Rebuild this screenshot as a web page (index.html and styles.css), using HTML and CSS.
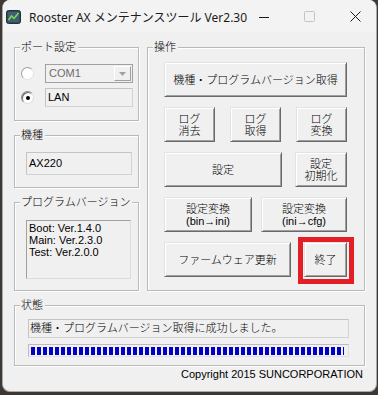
FILE: index.html
```html
<!DOCTYPE html>
<html lang="ja">
<head>
<meta charset="utf-8">
<title>Rooster AX メンテナンスツール</title>
<link rel="stylesheet" href="styles.css">
</head>
<body>
<div class="window">
  <div class="titlebar">
    <svg class="app-icon" width="15" height="14" viewBox="0 0 15 14">
      <rect x="0.5" y="0.5" width="14" height="13" rx="2" fill="#34495a" stroke="#22313c"/>
      <rect x="2" y="2" width="11" height="10" fill="#3d5f6e"/>
      <polyline points="2.5,10 5.5,6 8,8.5 12.5,3" fill="none" stroke="#7ed957" stroke-width="1.5"/>
    </svg>
    <span class="title">Rooster AX メンテナンスツール Ver2.30</span>
    <div class="caption">
      <svg class="cap-btn" width="12" height="12" viewBox="0 0 12 12"><line x1="1" y1="6.5" x2="11" y2="6.5" stroke="#1b1b1b" stroke-width="1"/></svg>
      <svg class="cap-btn" width="12" height="12" viewBox="0 0 12 12"><rect x="0.5" y="0.5" width="10" height="10" rx="1" fill="none" stroke="#c4c4c4"/></svg>
      <svg class="cap-btn" width="12" height="12" viewBox="0 0 12 12"><path d="M0.5 0.5 L10.5 10.5 M10.5 0.5 L0.5 10.5" stroke="#1b1b1b" stroke-width="1"/></svg>
    </div>
  </div>
  <div class="client">
    <div class="top">
      <div class="left-col">
        <div class="group port">
          <span class="legend">ポート設定</span>
          <div class="port-row">
            <span class="radio"></span>
            <div class="combo">
              <span class="combo-text">COM1</span>
              <span class="combo-btn"><svg width="7" height="4" viewBox="0 0 7 4"><path d="M0 0 H7 L3.5 4 Z" fill="#a0a0a0"/></svg></span>
            </div>
          </div>
          <div class="port-row">
            <span class="radio checked"></span>
            <div class="field lan">LAN</div>
          </div>
        </div>
        <div class="group model">
          <span class="legend">機種</span>
          <div class="field model-box">AX220</div>
        </div>
        <div class="group version">
          <span class="legend">プログラムバージョン</span>
          <div class="memo">
            <div>Boot: Ver.1.4.0</div>
            <div>Main: Ver.2.3.0</div>
            <div>Test: Ver.2.0.0</div>
          </div>
        </div>
      </div>
      <div class="group ops">
        <span class="legend">操作</span>
        <div class="btn-row">
          <button class="btn w-full">機種・プログラムバージョン取得</button>
        </div>
        <div class="btn-row gap15">
          <button class="btn w51">ログ<br>消去</button>
          <button class="btn w51">ログ<br>取得</button>
          <button class="btn w51">ログ<br>変換</button>
        </div>
        <div class="btn-row gap13">
          <button class="btn w118">設定</button>
          <button class="btn w52">設定<br>初期化</button>
        </div>
        <div class="btn-row gap9">
          <button class="btn w88">設定変換<br>(bin→ini)</button>
          <button class="btn w86">設定変換<br>(ini→cfg)</button>
        </div>
        <div class="btn-row gap13">
          <button class="btn w127">ファームウェア更新</button>
          <div class="highlight">
            <button class="btn w43">終了</button>
          </div>
        </div>
      </div>
    </div>
    <div class="group status">
      <span class="legend">状態</span>
      <div class="field status-box">機種・プログラムバージョン取得に成功しました。</div>
      <div class="progress"><div class="progress-fill"></div></div>
    </div>
    <div class="copyright">Copyright 2015 SUNCORPORATION</div>
  </div>
</div>
</body>
</html>
```
FILE: styles.css
```css
* { box-sizing: border-box; }

html, body {
  margin: 0;
  padding: 0;
}

body {
  width: 378px;
  height: 395px;
  overflow: hidden;
  background: #3d3833;
  font-family: "Liberation Sans", "Noto Sans CJK JP", sans-serif;
  font-size: 11px;
  font-weight: 300;
  color: #000;
}

.window {
  margin-left: 2px;
  width: 375px;
  height: 392px;
  background: #f0f0f0;
  border: 1px solid #a9a9a9;
  border-top: none;
  border-radius: 8px;
  overflow: hidden;
  display: flex;
  flex-direction: column;
}

.titlebar {
  height: 32px;
  flex: none;
  background: #f3f3f3;
  display: flex;
  align-items: center;
  padding-left: 3px;
}

.app-icon {
  display: block;
  margin-top: 1px;
}

.title {
  margin-left: 8px;
  font-family: "Noto Sans", "Noto Sans CJK JP", sans-serif;
  font-size: 12px;
  font-weight: 400;
  color: #1b1b1b;
  white-space: nowrap;
  margin-top: 1px;
}

.caption {
  margin-left: auto;
  display: flex;
  align-items: center;
  gap: 34px;
  padding-right: 14px;
  margin-top: 2px;
}

.cap-btn { display: block; }

.client {
  flex: 1;
  padding: 15px 13px 0 11px;
  display: flex;
  flex-direction: column;
}

.top {
  display: flex;
  gap: 8px;
  width: 351px;
}

.left-col {
  width: 125px;
  display: flex;
  flex-direction: column;
  gap: 14px;
}

.group {
  position: relative;
  border: 1px solid #b9b9b9;
  box-shadow: inset 1px 1px 0 #fff, 1px 1px 0 #fff;
}

.legend {
  position: absolute;
  top: -7px;
  left: 5px;
  height: 12px;
  line-height: 12px;
  padding: 0 2px 0 1px;
  background: #f0f0f0;
  white-space: nowrap;
}

/* port group */
.port {
  height: 74px;
  padding: 16px 0 0 6px;
  display: flex;
  flex-direction: column;
  gap: 5px;
}

.port-row {
  display: flex;
  align-items: center;
  height: 19px;
  gap: 11px;
}

.radio {
  width: 13px;
  height: 13px;
  border-radius: 50%;
  background: #fff;
  border: 1px solid;
  border-color: #a0a0a0 #e3e3e3 #e3e3e3 #a0a0a0;
  position: relative;
  flex: none;
}

.radio.checked {
  border-color: #8a8a8a #dcdcdc #dcdcdc #8a8a8a;
  box-shadow: inset 1px 1px 0 #6d6d6d;
}

.radio.checked::after {
  content: "";
  position: absolute;
  left: 4px;
  top: 4px;
  width: 4px;
  height: 4px;
  border-radius: 50%;
  background: #000;
}

.combo {
  width: 88px;
  height: 19px;
  border: 1px solid #a0a0a0;
  background: #f0f0f0;
  display: flex;
  align-items: center;
  padding: 1px;
}

.combo-text {
  flex: 1;
  color: #6d6d6d;
  padding-left: 2px;
  line-height: 15px;
}

.combo-btn {
  width: 17px;
  height: 15px;
  border: 1px solid;
  border-color: #fff #a0a0a0 #a0a0a0 #fff;
  background: #f0f0f0;
  display: flex;
  align-items: center;
  justify-content: center;
}

.combo-btn svg { display: block; }

.field {
  background: #f0f0f0;
  border: 1px solid #d3d3d3;
  border-top-color: #c4c4c4;
  border-left-color: #c4c4c4;
  padding-left: 2px;
  white-space: nowrap;
}

.lan {
  width: 88px;
  height: 19px;
  line-height: 17px;
}

/* model */
.model {
  height: 53px;
  padding: 16px 0 0 11px;
}

.model-box {
  width: 106px;
  height: 23px;
  line-height: 21px;
}

/* version */
.version {
  height: 89px;
  padding: 17px 0 0 11px;
}

.memo {
  width: 105px;
  height: 59px;
  background: #f0f0f0;
  border: 1px solid;
  border-color: #a0a0a0 #dcdcdc #dcdcdc #a0a0a0;
  padding: 1px 0 0 2px;
  line-height: 12px;
}

/* ops */
.ops {
  width: 218px;
  height: 244px;
  padding: 14px 16px 0 16px;
  display: flex;
  flex-direction: column;
  gap: 10px;
}

.btn-row {
  display: flex;
  height: 35px;
}

.gap15 { gap: 15px; }
.gap13 { gap: 13px; }
.gap9 { gap: 9px; }

.btn {
  height: 35px;
  margin: 0;
  padding: 0;
  background: #f0f0f0;
  border: 1px solid;
  border-color: #e3e3e3 #696969 #696969 #e3e3e3;
  box-shadow: inset 1px 1px 0 #fff, inset -1px -1px 0 #a0a0a0;
  font-family: "Liberation Sans", "Noto Sans CJK JP", sans-serif;
  font-size: 11px;
  font-weight: 300;
  line-height: 12px;
  color: #000;
  text-align: center;
  white-space: nowrap;
}

.w-full { width: 183px; }
.w51 { width: 51px; }
.w52 { width: 52px; }
.w118 { width: 118px; }
.w88 { width: 88px; }
.w86 { width: 86px; }
.w127 { width: 127px; }
.w43 { width: 43px; }

.highlight {
  position: relative;
}

.highlight::after {
  content: "";
  position: absolute;
  left: -6px;
  right: -7px;
  top: -5px;
  bottom: -7px;
  border: 5px solid #e31e25;
  pointer-events: none;
}

/* status */
.status {
  margin-top: 14px;
  width: 351px;
  height: 61px;
  padding: 13px 0 0 13px;
  display: flex;
  flex-direction: column;
  gap: 6px;
}

.status-box {
  width: 321px;
  height: 19px;
  line-height: 17px;
  padding-left: 1px;
}

.progress {
  width: 321px;
  height: 13px;
  border: 1px solid;
  border-color: #bcbcbc #e0e0e0 #e0e0e0 #bcbcbc;
  background: #f0f0f0;
  padding: 2px 4px 1px 2px;
}

.progress-fill {
  height: 8px;
  background: repeating-linear-gradient(to right, #0000c8 0 4px, transparent 4px 6px);
}

.copyright {
  margin-top: 2px;
  text-align: right;
  line-height: 13px;
  white-space: nowrap;
}
```
